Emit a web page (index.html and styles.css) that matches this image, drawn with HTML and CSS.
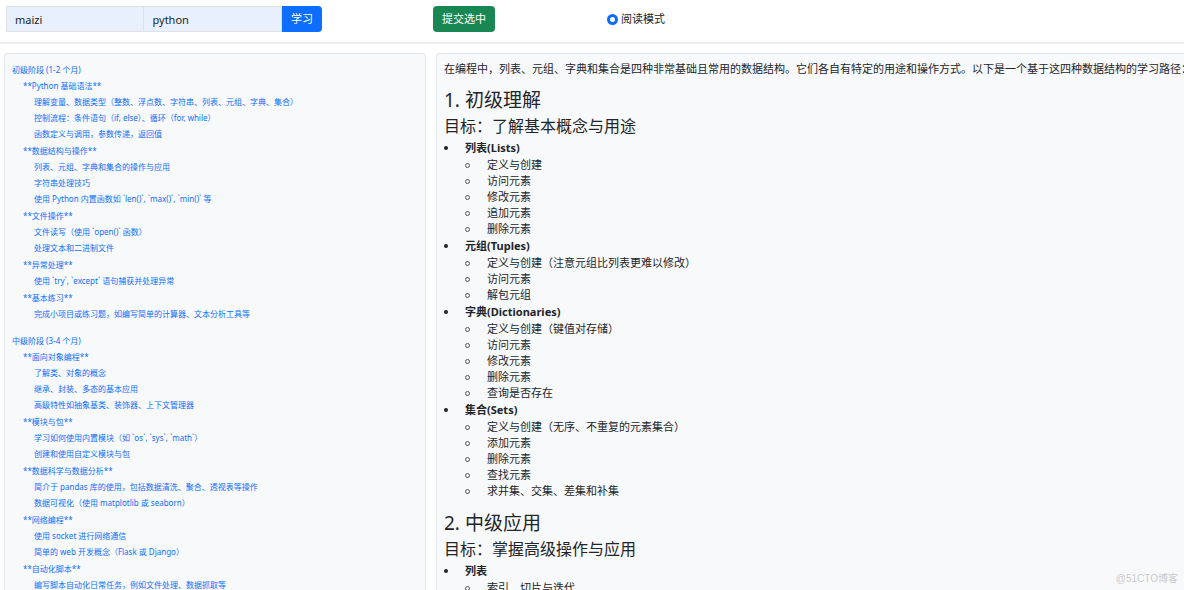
FILE: index.html
```html
<!DOCTYPE html>
<html lang="zh-CN">
<head>
<meta charset="utf-8">
<title>学习路径</title>
<link rel="stylesheet" href="styles.css">
</head>
<body>
<header class="toolbar">
  <form class="input-group">
    <input class="field" type="text" value="maizi" aria-label="用户">
    <input class="field" type="text" value="python" aria-label="主题">
    <button class="btn btn-primary" type="button">学习</button>
  </form>
  <div><button class="btn btn-success" type="button">提交选中</button></div>
  <label class="mode"><input class="radio" type="radio" name="mode" checked>阅读模式</label>
</header>
<main class="panels">
  <nav class="panel outline">
    <section class="stage">
      <a href="#">初级阶段 (1-2 个月)</a>
      <ul class="topics">
        <li><a href="#">**Python 基础语法**</a>
          <ul class="points">
            <li><a href="#">理解变量、数据类型（整数、浮点数、字符串、列表、元组、字典、集合）</a></li>
            <li><a href="#">控制流程：条件语句（if, else）、循环（for, while）</a></li>
            <li><a href="#">函数定义与调用，参数传递，返回值</a></li>
          </ul></li>
        <li><a href="#">**数据结构与操作**</a>
          <ul class="points">
            <li><a href="#">列表、元组、字典和集合的操作与应用</a></li>
            <li><a href="#">字符串处理技巧</a></li>
            <li><a href="#">使用 Python 内置函数如 `len()`, `max()`, `min()` 等</a></li>
          </ul></li>
        <li><a href="#">**文件操作**</a>
          <ul class="points">
            <li><a href="#">文件读写（使用 `open()` 函数）</a></li>
            <li><a href="#">处理文本和二进制文件</a></li>
          </ul></li>
        <li><a href="#">**异常处理**</a>
          <ul class="points">
            <li><a href="#">使用 `try`, `except` 语句捕获并处理异常</a></li>
          </ul></li>
        <li><a href="#">**基本练习**</a>
          <ul class="points">
            <li><a href="#">完成小项目或练习题，如编写简单的计算器、文本分析工具等</a></li>
          </ul></li>
      </ul>
    </section>
    <section class="stage">
      <a href="#">中级阶段 (3-4 个月)</a>
      <ul class="topics">
        <li><a href="#">**面向对象编程**</a>
          <ul class="points">
            <li><a href="#">了解类、对象的概念</a></li>
            <li><a href="#">继承、封装、多态的基本应用</a></li>
            <li><a href="#">高级特性如抽象基类、装饰器、上下文管理器</a></li>
          </ul></li>
        <li><a href="#">**模块与包**</a>
          <ul class="points">
            <li><a href="#">学习如何使用内置模块（如 `os`, `sys`, `math`）</a></li>
            <li><a href="#">创建和使用自定义模块与包</a></li>
          </ul></li>
        <li><a href="#">**数据科学与数据分析**</a>
          <ul class="points">
            <li><a href="#">简介于 pandas 库的使用，包括数据清洗、聚合、透视表等操作</a></li>
            <li><a href="#">数据可视化（使用 matplotlib 或 seaborn）</a></li>
          </ul></li>
        <li><a href="#">**网络编程**</a>
          <ul class="points">
            <li><a href="#">使用 socket 进行网络通信</a></li>
            <li><a href="#">简单的 web 开发概念（Flask 或 Django）</a></li>
          </ul></li>
        <li><a href="#">**自动化脚本**</a>
          <ul class="points">
            <li><a href="#">编写脚本自动化日常任务，例如文件处理、数据抓取等</a></li>
          </ul></li>
      </ul>
    </section>
  </nav>
  <article class="panel lesson">
    <p class="intro">在编程中，列表、元组、字典和集合是四种非常基础且常用的数据结构。它们各自有特定的用途和操作方式。以下是一个基于这四种数据结构的学习路径：</p>
    <h1 class="title">1. 初级理解</h1>
    <h2 class="goal">目标：了解基本概念与用途</h2>
    <ul class="kinds">
      <li class="kind"><strong>列表(Lists)</strong>
        <ul class="steps">
          <li>定义与创建</li>
          <li>访问元素</li>
          <li>修改元素</li>
          <li>追加元素</li>
          <li>删除元素</li>
        </ul></li>
      <li class="kind"><strong>元组(Tuples)</strong>
        <ul class="steps">
          <li>定义与创建（注意元组比列表更难以修改）</li>
          <li>访问元素</li>
          <li>解包元组</li>
        </ul></li>
      <li class="kind"><strong>字典(Dictionaries)</strong>
        <ul class="steps">
          <li>定义与创建（键值对存储）</li>
          <li>访问元素</li>
          <li>修改元素</li>
          <li>删除元素</li>
          <li>查询是否存在</li>
        </ul></li>
      <li class="kind"><strong>集合(Sets)</strong>
        <ul class="steps">
          <li>定义与创建（无序、不重复的元素集合）</li>
          <li>添加元素</li>
          <li>删除元素</li>
          <li>查找元素</li>
          <li>求并集、交集、差集和补集</li>
        </ul></li>
    </ul>
    <h1 class="title">2. 中级应用</h1>
    <h2 class="goal">目标：掌握高级操作与应用</h2>
    <ul class="kinds">
      <li class="kind"><strong>列表</strong>
        <ul class="steps">
          <li>索引、切片与迭代</li>
        </ul></li>
    </ul>
  </article>
</main>
<div class="watermark">@51CTO博客</div>
</body>
</html>
```

FILE: styles.css
```css
*,
*::before {
  box-sizing: border-box;
}

body {
  margin: 0;
  height: 100vh;
  display: flex;
  flex-direction: column;
  overflow: hidden;
  background: #fff;
  color: #212529;
  font-family: "Noto Sans", "Noto Sans CJK SC", sans-serif;
  font-size: 11px;
  line-height: 16px;
}

ul {
  list-style: none;
  margin: 0;
  padding: 0;
}

.toolbar {
  display: grid;
  grid-template-columns: 427fr 174fr 577fr;
  align-items: center;
  padding: 6px 0 10px 6px;
  border-bottom: 2px solid #eceeef;
}

.input-group {
  display: flex;
  width: 74%;
}

.field {
  flex: 1;
  min-width: 0;
  height: 26px;
  padding: 0 8px;
  border: 1px solid #dee2e6;
  background: #e8f0fe;
  color: #212529;
  font: inherit;
}

.field + .field {
  border-left: 0;
}

.btn {
  display: block;
  height: 26px;
  padding: 0 9px;
  border: 0;
  border-radius: 4px;
  color: #fff;
  font: inherit;
}

.btn-primary {
  background: #0d6efd;
  border-radius: 0 4px 4px 0;
}

.btn-success {
  background: #198754;
}

.mode {
  display: flex;
  align-items: center;
  gap: 3px;
}

.radio {
  appearance: none;
  width: 11px;
  height: 11px;
  margin: 0;
  border: 3px solid #0d6efd;
  border-radius: 50%;
  background: #fff;
}

.panels {
  flex: 1;
  min-height: 0;
  display: grid;
  grid-template-columns: 422fr 748fr;
  gap: 10px;
  padding: 9px 0 0 4px;
}

.panel {
  min-width: 0;
  min-height: 0;
  overflow: hidden;
  padding: 7px 7px 0;
  border: 1px solid #e3e6ea;
  border-bottom: 0;
  border-radius: 4px 4px 0 0;
  background: #f8f9fb;
}

.lesson {
  padding-right: 0;
  border-right: 0;
  border-top-right-radius: 0;
}

.outline {
  padding-top: 8px;
  font-size: 8px;
}

.outline a {
  display: block;
  color: #0d6efd;
  text-decoration: none;
}

.stage {
  margin-bottom: 10px;
}

.topics,
.points {
  padding-left: 11px;
}

.topics > li {
  padding-bottom: 1px;
}

.intro {
  margin: 0;
  white-space: nowrap;
}

.title {
  margin: 11px 0 4px;
  font-size: 19px;
  font-weight: 400;
  line-height: 24px;
}

.goal {
  margin: 0 0 4px;
  font-size: 16px;
  font-weight: 400;
  line-height: 20px;
}

.kind {
  display: grid;
  grid-template-columns: 21px 1fr;
  row-gap: 1px;
  padding-bottom: 1px;
}

.kind::before {
  content: "";
  align-self: center;
  width: 4px;
  height: 4px;
  border-radius: 50%;
  background: #212529;
}

.steps {
  grid-column: 2;
}

.steps li {
  display: grid;
  grid-template-columns: 22px 1fr;
}

.steps li::before {
  content: "";
  align-self: center;
  width: 5px;
  height: 5px;
  border: 1px solid #50555a;
  border-radius: 50%;
}

.watermark {
  position: absolute;
  right: 6px;
  bottom: 3px;
  color: #c8cacc;
  font-family: "Liberation Sans", "Noto Sans CJK SC", sans-serif;
  font-size: 10px;
}
```
